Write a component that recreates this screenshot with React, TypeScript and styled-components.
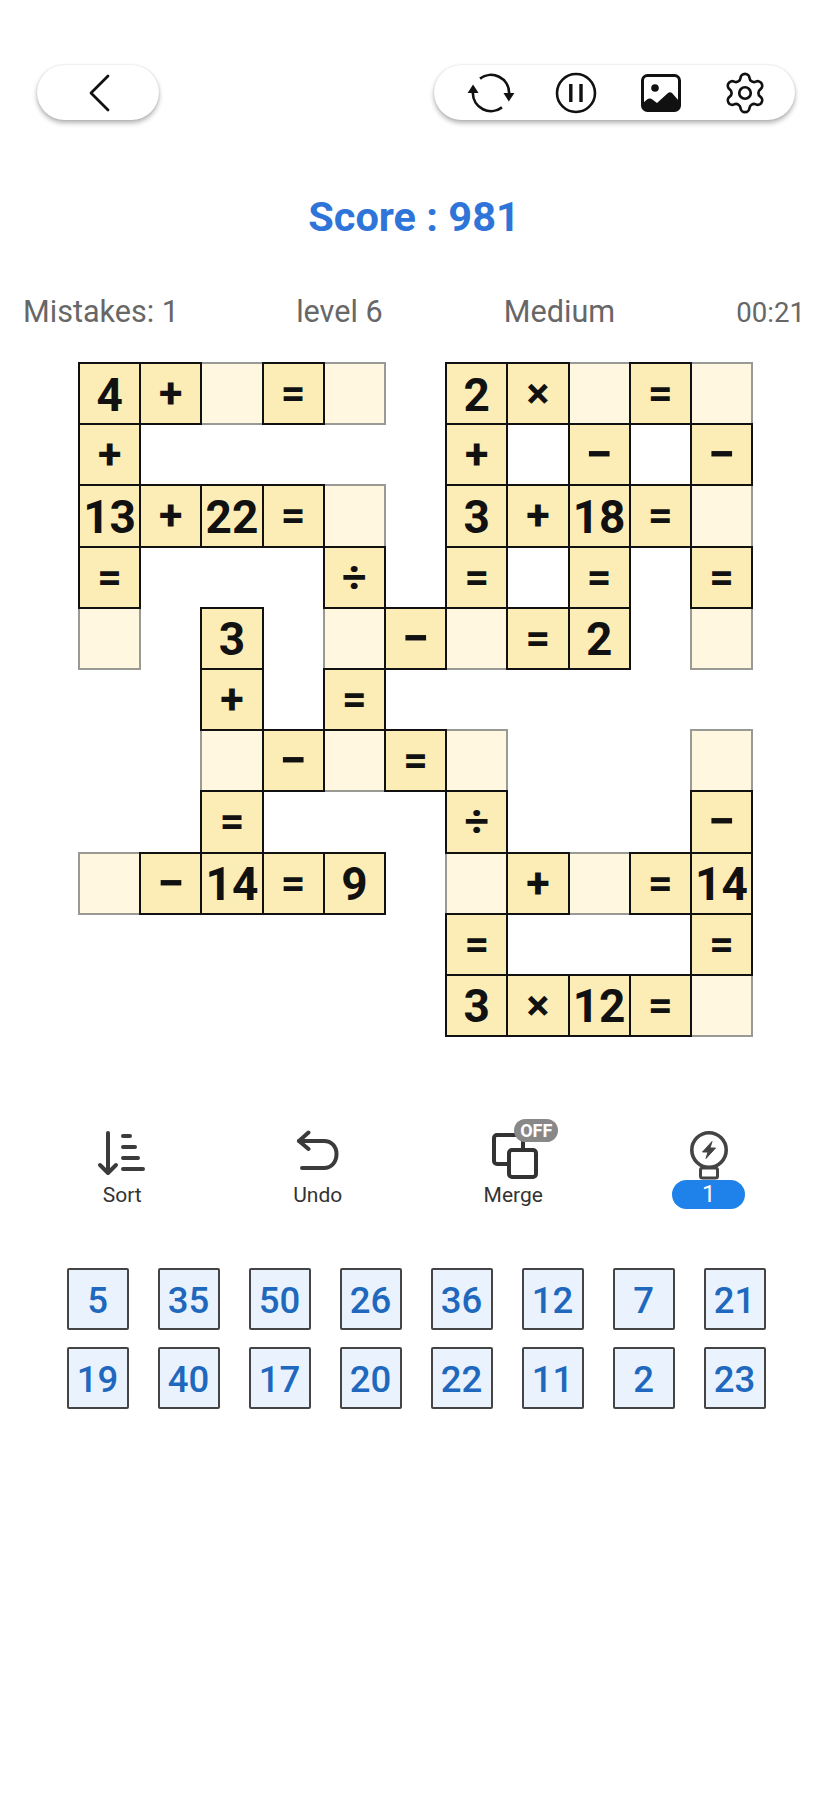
import React from "react";
import styled, { createGlobalStyle } from "styled-components";
import { Settings } from "lucide-react";

const Global = createGlobalStyle`
  html, body { margin: 0; padding: 0; background: #fff; }
  body { font-family: Roboto, "Liberation Sans", sans-serif; }
`;

const Page = styled.div`
  width: 828px;
  height: 1795px;
  padding-top: 65px;
  box-sizing: border-box;
  overflow: hidden;
`;

const TopBar = styled.header`
  display: flex;
  justify-content: space-between;
  padding: 0 33px 0 37px;
`;

const Pill = styled.div`
  height: 55px;
  box-sizing: border-box;
  background: #fff;
  border-radius: 28px;
  box-shadow: 0 3px 5px rgba(0, 0, 0, 0.3), 0 0 2px rgba(0, 0, 0, 0.12);
  display: flex;
  align-items: center;
`;

const BackPill = styled(Pill)`
  width: 122px;
  justify-content: center;
  padding-left: 3px;
`;

const ActionPill = styled(Pill)`
  width: 361px;
  padding-left: 15px;
`;

const ActionSlot = styled.div`
  width: 84.7px;
  height: 55px;
  display: flex;
  align-items: center;
  justify-content: center;
`;

const Score = styled.h1`
  margin: 73px 0 53px;
  font-size: 41.5px;
  line-height: 48px;
  font-weight: 700;
  color: #2f74d8;
  text-align: center;
`;

const Stats = styled.div`
  display: flex;
  justify-content: space-between;
  align-items: baseline;
  padding: 0 23px 0 23px;
  height: 36px;
  line-height: 36px;
  font-size: 30.6px;
  color: #676767;
`;

const Level = styled.span`
  margin-left: -4px;
`;

const Timer = styled.span`
  font-size: 27.6px;
`;

const Board = styled.div`
  margin: 33px 0 0 79px;
  display: grid;
  grid-template-columns: repeat(11, 61.2px);
  grid-template-rows: repeat(11, 61.2px);
`;

const Blank = styled.div``;

const Light = styled.div`
  margin: -1px;
  background: #fff7df;
  border: 2px solid #9a9a94;
`;

const Tile = styled.div<{ $size: number; $drop: number }>`
  margin: -1px;
  padding-top: ${(p) => p.$drop}px;
  box-sizing: border-box;
  z-index: 1;
  background: #fcedb6;
  border: 2px solid #111;
  display: flex;
  align-items: center;
  justify-content: center;
  color: #111;
  font-weight: 700;
  font-size: ${(p) => p.$size}px;
  line-height: 1;
`;

const Tools = styled.div`
  margin: 94px 0 0 24.5px;
  display: grid;
  grid-template-columns: repeat(4, 195.5px);
  height: 78px;
`;

const Tool = styled.div`
  display: flex;
  flex-direction: column;
  align-items: center;
`;

const ToolIcon = styled.div`
  position: relative;
  height: 50px;
  display: flex;
  justify-content: center;
`;

const ToolLabel = styled.span`
  margin-top: 2px;
  font-size: 21px;
  line-height: 26px;
  color: #333;
`;

const OffBadge = styled.span`
  position: absolute;
  left: 26px;
  top: -11px;
  width: 44px;
  height: 23px;
  border-radius: 12px;
  background: #888;
  color: #fff;
  font-size: 18px;
  font-weight: 700;
  line-height: 23px;
  text-align: center;
`;

const HintCount = styled.span`
  width: 73px;
  height: 29px;
  border-radius: 15px;
  background: #1e82ea;
  color: #fff;
  font-size: 24px;
  line-height: 29px;
  text-align: center;
`;

const Bank = styled.div`
  margin: 60px 0 0 66.5px;
  display: grid;
  grid-template-columns: repeat(8, 62px);
  grid-auto-rows: 62px;
  column-gap: 29px;
  row-gap: 17px;
`;

const NumberTile = styled.div`
  box-sizing: border-box;
  padding-top: 2px;
  border: 2px solid #444;
  border-radius: 2px;
  background: #eaf3fd;
  color: #2068bd;
  font-size: 36.5px;
  font-weight: 500;
  display: flex;
  align-items: center;
  justify-content: center;
`;

const LAYOUT = [
  "4 + _ = _ . 2 × _ = _",
  "+ . . . . . + . − . −",
  "13 + 22 = _ . 3 + 18 = _",
  "= . . . ÷ . = . = . =",
  "_ . 3 . _ − _ = 2 . _",
  ". . + . = . . . . . .",
  ". . _ − _ = _ . . . _",
  ". . = . . . ÷ . . . −",
  "_ − 14 = 9 . _ + _ = 14",
  ". . . . . . = . . . =",
  ". . . . . . 3 × 12 = _",
].flatMap((row) => row.split(" "));

const BANK = [5, 35, 50, 26, 36, 12, 7, 21, 19, 40, 17, 20, 22, 11, 2, 23];

const tileSize = (t: string) => (t === "−" ? 49 : "+×÷=".includes(t) ? 43 : 46);
const tileDrop = (t: string) => ("+−×÷=".includes(t) ? 0 : 2);

const BackIcon = () => (
  <svg width="24" height="38" viewBox="0 0 24 38" fill="none" stroke="#111" strokeWidth="2.8" strokeLinecap="round" strokeLinejoin="round">
    <path d="M20 2 L3 19 L20 36" />
  </svg>
);

const RefreshIcon = () => (
  <svg width="48" height="42" viewBox="0 0 50 44" fill="none">
    <path d="M13.5 6.9 A19 19 0 0 1 44 22" stroke="#111" strokeWidth="2.8" />
    <path d="M36.5 37.1 A19 19 0 0 1 6 22" stroke="#111" strokeWidth="2.8" />
    <path d="M38 22 H49.5 L43.7 31 Z" fill="#111" />
    <path d="M0.5 22 H12 L6.2 13 Z" fill="#111" />
  </svg>
);

const PauseIcon = () => (
  <svg width="42" height="42" viewBox="0 0 42 42" fill="none" stroke="#111">
    <circle cx="21" cy="21" r="19" strokeWidth="2.6" />
    <path d="M15.8 12 V30 M26 12 V30" strokeWidth="3.4" />
  </svg>
);

const ImageIcon = () => (
  <svg width="42" height="40" viewBox="0 0 42 40" fill="none">
    <rect x="2.5" y="2.5" width="37" height="35" rx="5" stroke="#111" strokeWidth="3" />
    <circle cx="15" cy="15" r="3.8" fill="#111" />
    <path d="M3 30 L7 26.5 Q10 24.5 13 27 L17 30 L28 20 Q30 18.5 32 20 L39 28 V33 Q39 38 34 38 H8 Q3 38 3 33 Z" fill="#111" />
  </svg>
);

const SortIcon = () => (
  <svg width="50" height="46" viewBox="0 0 50 46" fill="none" stroke="#3b3b3b" strokeWidth="4" strokeLinecap="round" strokeLinejoin="round">
    <path d="M11 3 V43 M3 35 L11 43 L19 35" />
    <path d="M26 6 H33 M26 17 H38 M26 28 H41 M26 39 H46" />
  </svg>
);

const UndoIcon = () => (
  <svg width="44" height="42" viewBox="0 0 44 42" fill="none" stroke="#3b3b3b" strokeWidth="4" strokeLinecap="round" strokeLinejoin="round">
    <path d="M12.5 2.5 L3 11 L12.5 19" />
    <path d="M3 11 H28 C35.5 11 40.5 16.5 40.5 24 C40.5 32 35.5 38 28 38 H6" />
  </svg>
);

const MergeIcon = () => (
  <svg width="50" height="50" viewBox="0 0 50 50" fill="none" stroke="#333" strokeWidth="4" strokeLinejoin="round">
    <rect x="6" y="5" width="29" height="29" rx="3" />
    <rect x="21" y="20" width="27" height="27" rx="3" fill="#fff" />
  </svg>
);

const BulbIcon = () => (
  <svg width="44" height="50" viewBox="0 0 44 50" fill="none" stroke="#444" strokeWidth="3.6" strokeLinejoin="round">
    <rect x="13.5" y="38" width="17" height="10" rx="2" strokeWidth="3" />
    <circle cx="22" cy="20" r="17.2" fill="#fff" />
    <path d="M25 11.5 L15.5 22 H21 L19 28.5 L28.5 18 H23 Z" fill="#444" strokeWidth="1" />
  </svg>
);

export default function App() {
  return (
    <Page>
      <Global />
      <TopBar>
        <BackPill>
          <BackIcon />
        </BackPill>
        <ActionPill>
          <ActionSlot><RefreshIcon /></ActionSlot>
          <ActionSlot><PauseIcon /></ActionSlot>
          <ActionSlot><ImageIcon /></ActionSlot>
          <ActionSlot><Settings size={46} strokeWidth={1.4} color="#111" /></ActionSlot>
        </ActionPill>
      </TopBar>
      <Score>Score : 981</Score>
      <Stats>
        <span>Mistakes: 1</span>
        <Level>level 6</Level>
        <span>Medium</span>
        <Timer>00:21</Timer>
      </Stats>
      <Board>
        {LAYOUT.map((t, i) =>
          t === "." ? (
            <Blank key={i} />
          ) : t === "_" ? (
            <Light key={i} />
          ) : (
            <Tile key={i} $size={tileSize(t)} $drop={tileDrop(t)}>{t}</Tile>
          )
        )}
      </Board>
      <Tools>
        <Tool>
          <ToolIcon><SortIcon /></ToolIcon>
          <ToolLabel>Sort</ToolLabel>
        </Tool>
        <Tool>
          <ToolIcon><UndoIcon /></ToolIcon>
          <ToolLabel>Undo</ToolLabel>
        </Tool>
        <Tool>
          <ToolIcon>
            <MergeIcon />
            <OffBadge>OFF</OffBadge>
          </ToolIcon>
          <ToolLabel>Merge</ToolLabel>
        </Tool>
        <Tool>
          <ToolIcon><BulbIcon /></ToolIcon>
          <HintCount>1</HintCount>
        </Tool>
      </Tools>
      <Bank>
        {BANK.map((n) => (
          <NumberTile key={n}>{n}</NumberTile>
        ))}
      </Bank>
    </Page>
  );
}
